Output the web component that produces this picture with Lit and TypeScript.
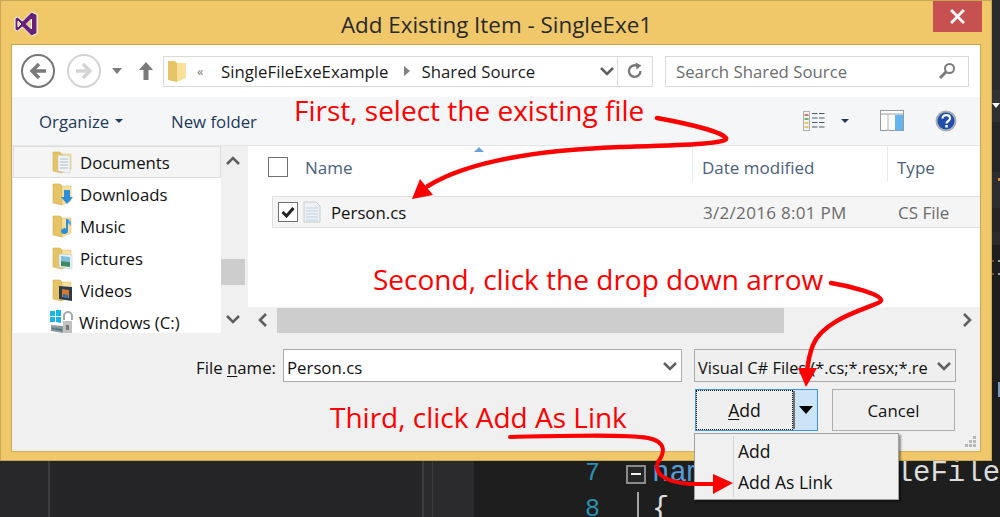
import { LitElement, html, css, svg } from "lit";
import { customElement } from "lit/decorators.js";

const folder = (overlay: unknown = "") => html`<svg class="ficon" viewBox="0 0 24 24" width="24" height="24">
  <path d="M3 2h7l2 2v19l-9-2z" fill="#e6c465" stroke="#d2ad55" stroke-width=".6"/>
  <path d="M12 4h9v15l-9 4z" fill="#f6e09a" stroke="#dcc27a" stroke-width=".6"/>
  ${overlay}
</svg>`;

const overlays: Record<string, unknown> = {
  doc: svg`<path d="M8 5l12 1v17l-12-2z" fill="#f2f3f3" stroke="#c0c4c8" stroke-width=".5"/><path d="M10 9h8M10 12h8M10 15h8M10 18h8" stroke="#9fb4c8" stroke-width=".8"/>`,
  down: svg`<path d="M14 8h6v7h3l-6 7-6-7h3z" fill="#2d8fd8"/>`,
  music: svg`<path d="M18 5v12a3.500 3 0 1 1-2-2.600V5z" fill="#2d8fd8"/><path d="M18 5l3 3v4l-3-3z" fill="#4aa6e4"/>`,
  pic: svg`<path d="M9 8l13 1v14l-13-2z" fill="#e9f2f6" stroke="#b4c0c8" stroke-width=".5"/><path d="M11 10l9 1v5l-9-1z" fill="#7fbce0"/><path d="M11 15l9 1v5l-9-1z" fill="#3d8a5a"/>`,
  vid: svg`<path d="M9 8l13 1v14l-13-2z" fill="#2c3a4c"/><path d="M12 11l7 1v8l-7-1z" fill="#d7772a"/><path d="M13 16l5 1v3l-5-1z" fill="#2c6fb4"/>`,
};

const drive = html`<svg class="ficon" viewBox="0 0 26 24" width="26" height="24">
  <path d="M1 1h5v5H1zM7 0l5-1v7H7zM1 7h5v5H1zM7 7h5v6l-5-1z" fill="#19b4ea"/>
  <path d="M2 15l12 1v7L2 21z" fill="#8d979c"/><path d="M3 18l10 1v2L3 19z" fill="#46787c"/>
  <path d="M15 10V6a4 4 0 0 1 8 0v4" fill="none" stroke="#a6a9aa" stroke-width="2"/>
  <rect x="14" y="11" width="9" height="12" fill="#c0c2c2"/><rect x="17" y="15" width="3" height="5" fill="#777"/>
</svg>`;

const chevron = (cls: string, d: string) => html`<svg class=${cls} viewBox="0 0 14 14" width="14" height="14"><path d=${d} fill="none" stroke="#606060" stroke-width="2.600"/></svg>`;

@customElement("app-root")
export class AppRoot extends LitElement {
  static styles = css`
    :host { display: block; width: 1000px; height: 517px; position: relative; overflow: hidden; font-family: "Open Sans", "Noto Sans", sans-serif; background: #1e1e1e; }
    svg { display: block; flex: none; }

    .ide { height: 517px; display: grid; grid-template-columns: 48px 2px 372px 2px 8px 42px 1fr; background: #252526; overflow: hidden; }
    .ide > div { height: 517px; }
    .p1 { background: #28282a; }
    .ln { background: #3c3c3e; }
    .p2 { background: #252527; }
    .pm { background: #2a2a2c; }
    .p3 { background: #2b2b2e; border-left: 1px solid #3c3c3e; box-sizing: border-box; }
    .code { background: #1e1e1e; padding-top: 456px; box-sizing: border-box; font-family: "Liberation Mono", monospace; overflow: hidden; position: relative; }
    .coderow { display: grid; grid-template-columns: 57px 40px 1fr; column-gap: 6px; height: 36px; font-size: 29px; line-height: 36px; align-items: center; color: #dcdcdc; padding-left: 69px; white-space: nowrap; overflow: hidden; }
    .num { color: #2b91af; font-size: 25px; text-align: right; }
    .kw { color: #569cd6; }
    .collapse { width: 20px; height: 19px; margin-left: 20px; box-sizing: border-box; border: 2px solid #8a8a8a; background: #262626; display: flex; align-items: center; justify-content: center; }
    .collapse i { display: block; width: 10px; height: 2px; background: #f1f1f1; }
    .guide { width: 2px; height: 36px; background: #a5a5a5; margin-left: 31px; }

    .strip { position: absolute; left: 518px; top: 0; width: 8px; height: 454px; display: flex; flex-direction: column; }
    .s1 { height: 90px; background: #2a2b2f; }
    .s2 { height: 32px; background: #2e3034; padding-top: 13px; box-sizing: border-box; }
    .s2 i { display: block; width: 0; height: 0; border: 4px solid transparent; border-top: 5px solid #f4f4f4; border-bottom: 0; }
    .s3 { height: 50px; background: #25262a; }
    .s4 { height: 36px; background: #2c2d30; padding: 6px 0 0 6px; box-sizing: border-box; }
    .s4 i { display: block; width: 2px; height: 3px; background: #d8873c; }
    .s5 { height: 24px; background: #252527; }
    .s6 { height: 13px; background: #2a2a2c; }
    .s7 { height: 15px; }
    .dots { height: 2px; display: flex; justify-content: space-between; }
    .dots i { display: block; width: 2px; height: 2px; }
    .dots .a { background: #7a4a3a; }
    .dots .b { background: #8ca0ac; }
    .s8 { height: 11px; }
    .s9 { height: 15px; margin-left: 6px; width: 2px; background: #7c9ab8; margin-top: 107px; }

    .dialog { position: absolute; left: 0; top: 0; width: 971px; height: 451px; background: #f0c869; border: 1px solid #c9a655; padding: 0 9px 8px 10px; display: flex; flex-direction: column; }
    .titlebar { height: 43px; flex: none; display: flex; align-items: center; justify-content: center; position: relative; font-size: 22.400px; color: #2a2a2a; padding-top: 4px; box-sizing: border-box; }
    .vs { position: absolute; left: 2px; top: 10px; }
    .close { position: absolute; right: 0; top: 0; width: 49px; height: 31px; background: #c75050; display: flex; align-items: center; justify-content: center; }
    .inner { flex: 1; background: #f0f0f0; border: 1px solid #c9a655; border-bottom-color: #d3b060; display: flex; flex-direction: column; min-height: 0; width: 970px; box-sizing: border-box; }

    .nav { height: 52px; flex: none; background: #fff; display: flex; align-items: center; padding: 0 0 0 9px; box-sizing: border-box; }
    .circle { width: 34px; height: 34px; border-radius: 50%; box-sizing: border-box; border: 2.500px solid #767676; display: flex; align-items: center; justify-content: center; }
    .circle.off { border-color: #d4d4d4; margin-left: 12px; }
    .navcaret { margin: 0 0 0 11px; width: 0; height: 0; border: 5px solid transparent; border-top: 6px solid #7c7c7c; border-bottom: 0; }
    .up { margin: 0 9px 0 16px; }
    .addr { width: 490px; height: 31px; box-sizing: border-box; border: 1px solid #d9d9d9; display: flex; align-items: center; font-size: 16.800px; color: #1a1a1a; }
    .addr .fold { margin: 0 0 0 1px; }
    .addr .ch { color: #7a7a7a; font-size: 13px; margin: 0 0 0 8px; width: 24px; }
    .sep { width: 0; height: 0; border: 5.500px solid transparent; border-left: 6px solid #808080; border-right: 0; margin: 0 12px 0 15px; }
    .addr .spacer { flex: 1; }
    .addr .combo-ch { margin-right: 3px; }
    .refresh { width: 34px; height: 29px; border-left: 1px solid #d9d9d9; display: flex; align-items: center; justify-content: center; }
    .search { width: 304px; height: 31px; margin-left: 12px; box-sizing: border-box; border: 1px solid #d9d9d9; display: flex; align-items: center; justify-content: space-between; padding: 0 12px 0 10px; font-size: 16.800px; color: #6d6d6d; }

    .toolbar { height: 49px; flex: none; background: #f5f6f7; border-bottom: 1px solid #e6e6e6; box-sizing: border-box; display: flex; align-items: center; padding: 0 0 0 27px; color: #1e395b; font-size: 16.800px; }
    .caret { width: 0; height: 0; border: 4px solid transparent; border-top: 4.500px solid #1e395b; border-bottom: 0; }
    .org { display: flex; align-items: center; gap: 6px; width: 132px; }
    .tools-r { margin-left: auto; display: flex; align-items: center; padding-right: 23px; }
    .tools-r .caret { margin: 0 31px 0 16px; }
    .tools-r .pane { margin-right: 31px; }

    .panes { height: 187px; flex: none; display: grid; grid-template-columns: 209px 24px 3px 1fr; background: #f0f0f0; }
    .tree { background: #fff; margin-left: 1px; font-size: 16.800px; color: #111; overflow: hidden; }
    .tree .row { height: 32px; display: flex; align-items: center; box-sizing: border-box; padding-left: 37px; gap: 6px; }
    .tree .row.sel { background: #f5f5f5; border: 1px solid #dedede; padding-left: 36px; }
    .tree .row.drive { padding-left: 36px; gap: 4px; }
    .vbar { background: #f0f0f0; display: flex; flex-direction: column; align-items: center; justify-content: space-between; padding: 8px 0 7px; box-sizing: border-box; }
    .vthumb { width: 24px; height: 26px; background: #cdcdcd; margin-top: 64px; }
    .gap { background: #f0f0f0; }
    .list { background: #fff; display: flex; flex-direction: column; min-width: 0; position: relative; }
    .head { height: 50px; flex: none; display: grid; grid-template-columns: 444px 195px 1fr; align-items: start; font-size: 17px; color: #4c607a; }
    .head > div { height: 36px; display: flex; align-items: center; box-sizing: border-box; padding-top: 6px; }
    .head .c1 { padding-left: 20px; gap: 17px; }
    .head .c2, .head .c3 { border-left: 1px solid #e3ecf3; padding-left: 9px; }
    .sort { position: absolute; left: 226px; top: 1px; width: 0; height: 0; border: 5px solid transparent; border-bottom: 5px solid #6ba4d4; border-top: 0; }
    .cb { width: 20px; height: 20px; box-sizing: border-box; border: 1px solid #707070; background: #fff; display: flex; align-items: center; justify-content: center; }
    .frow { margin-left: 24px; height: 32px; flex: none; display: grid; grid-template-columns: 420px 195px 1fr; align-items: center; box-sizing: border-box; background: #f5f5f5; border: 1px solid #dedede; border-right: 0; font-size: 17px; color: #6b6b6b; }
    .frow .c1 { display: flex; align-items: center; padding-left: 5px; gap: 5px; color: #111; font-size: 16.800px; }
    .frow .c1 span.nm { margin-left: 5px; }
    .frow .c2 { padding-left: 10px; letter-spacing: .3px; }
    .frow .c3 { padding-left: 10px; }
    .lspacer { flex: 1; }
    .hbar { height: 26px; flex: none; background: #f0f0f0; display: flex; align-items: center; padding-left: 8px; }
    .hthumb { width: 507px; height: 25px; background: #cdcdcd; margin: 0 0 0 7px; }
    .hbar .r { margin-left: auto; margin-right: 6px; }

    .footer { flex: 1; display: flex; flex-direction: column; font-size: 16.800px; color: #111; padding-top: 16px; box-sizing: border-box; position: relative; }
    .fr1 { display: flex; align-items: center; height: 33px; justify-content: flex-end; padding-right: 24px; }
    .lbl { margin-right: 7px; padding-top: 3px; }
    u { text-underline-offset: 2px; text-decoration-thickness: 1px; }
    .input { width: 399px; height: 33px; box-sizing: border-box; background: #fff; border: 1px solid #ababab; display: flex; align-items: center; justify-content: space-between; padding: 0 4px 0 3px; }
    .input span, .filter span { padding-top: 3px; }
    .filter { width: 262px; height: 33px; margin-left: 12px; box-sizing: border-box; background: #efefef; border: 1px solid #ababab; display: flex; align-items: center; justify-content: space-between; padding: 0 4px 0 3px; white-space: nowrap; overflow: hidden; font-size: 16.400px; }
    .fr2 { display: flex; justify-content: flex-end; gap: 14px; padding: 7px 25px 0 0; }
    .split { width: 123px; height: 42px; box-sizing: border-box; display: grid; grid-template-columns: 97px 1fr; border: 1px solid #3c94dc; background: #cce4f7; }
    .split .main { background: #efefef; outline: 1px dotted #111; outline-offset: -1px; display: flex; align-items: center; justify-content: center; font-size: 17.600px; }
    .split .drop { border-left: 2px solid #707070; display: flex; align-items: center; justify-content: center; margin: 1px 0; }
    .tri { width: 0; height: 0; border: 7px solid transparent; border-top: 8px solid #000; border-bottom: 0; }
    .btn { width: 123px; height: 42px; box-sizing: border-box; background: #efefef; border: 1px solid #adadad; display: flex; align-items: center; justify-content: center; }
    .grip { position: absolute; right: 3px; bottom: 3px; }

    .menu { position: absolute; left: 694px; top: 433px; width: 205px; height: 67px; box-sizing: border-box; background: #f0f0f0; border: 1px solid #a0a0a0; box-shadow: 2px 2px 2px rgba(0,0,0,.4); font-size: 17.500px; color: #111; display: grid; grid-template-rows: 1fr 1fr; padding: 2px 0; }
    .menu div { display: flex; align-items: center; padding-left: 43px; }
    .menu .menuline { position: absolute; left: 38px; top: 2px; bottom: 2px; width: 1px; background: #d4d4d4; padding: 0; }

    .note { position: absolute; color: #ff0000; font-size: 28px; white-space: nowrap; line-height: 36px; }
    .n1 { left: 294px; top: 92px; }
    .n2 { left: 373px; top: 261px; }
    .n3 { left: 330px; top: 399px; }
    .arrows { position: absolute; left: 0; top: 0; pointer-events: none; }
  `;

  render() {
    return html`
      <div class="ide">
        <div class="p1"></div><div class="ln"></div><div class="p2"></div><div class="ln"></div><div class="pm"></div><div class="p3"></div>
        <div class="code">
          <div class="coderow"><span class="num">7</span><span class="collapse"><i></i></span><span><span class="kw">namespace</span> SingleFileE</span></div>
          <div class="coderow"><span class="num">8</span><span class="guide"></span><span>{</span></div>
          <div class="strip">
            <div class="s1"></div>
            <div class="s2"><i></i></div>
            <div class="s3"></div>
            <div class="s4"><i></i></div>
            <div class="s5"></div>
            <div class="s6"></div>
            <div class="s7"></div>
            <div class="dots"><i class="a"></i><i class="b"></i></div>
            <div class="s8"></div>
            <div class="dots"><i class="a"></i><i class="b"></i></div>
            <div class="s9"></div>
          </div>
        </div>
      </div>

      <div class="dialog">
        <div class="titlebar">
          <svg class="vs" viewBox="0 0 26 26" width="26" height="26">
            <path d="M18.500 1 24 3.500v19L18.500 25l-9-9-5 4L2 18.800V7.200L4.500 6l5 4zM18.500 8l-5 5 5 5zM5 10v6l3-3z" fill="#68217a" fill-rule="evenodd" stroke="#fff" stroke-width="1"/>
          </svg>
          <span>Add Existing Item - SingleExe1</span>
          <div class="close"><svg viewBox="0 0 14 14" width="15" height="15"><path d="M1 1l12 12M13 1L1 13" stroke="#fff" stroke-width="2.600"/></svg></div>
        </div>
        <div class="inner">
          <div class="nav">
            <div class="circle"><svg viewBox="0 0 20 20" width="20" height="20"><path d="M11 3l-7 7 7 7M4 10h14" fill="none" stroke="#7a7a7a" stroke-width="3.400"/></svg></div>
            <div class="circle off"><svg viewBox="0 0 20 20" width="20" height="20"><path d="M9 3l7 7-7 7M16 10H2" fill="none" stroke="#d4d4d4" stroke-width="3.400"/></svg></div>
            <div class="navcaret"></div>
            <svg class="up" viewBox="0 0 16 20" width="16" height="20"><path d="M8 1l7 8h-4.500v10h-5V9H1z" fill="#7a7a7a"/></svg>
            <div class="addr">
              <span class="fold"><svg viewBox="0 0 24 24" width="24" height="24"><path d="M3 2h7l2 2v19l-9-2z" fill="#e6c465"/><path d="M12 4h9v15l-9 4z" fill="#f6e09a"/></svg></span>
              <span class="ch">«</span><span>SingleFileExeExample</span><span class="sep"></span><span>Shared Source</span>
              <span class="spacer"></span>
              ${chevron("combo-ch", "M1 4l6 6 6-6")}
              <div class="refresh"><svg viewBox="0 0 18 18" width="18" height="18"><path d="M14.500 9A5.800 5.800 0 1 1 11 3.700" fill="none" stroke="#7a7a7a" stroke-width="2.400"/><path d="M9.500.5l6 3-5 4z" fill="#7a7a7a"/></svg></div>
            </div>
            <div class="search"><span>Search Shared Source</span>
              <svg viewBox="0 0 18 18" width="18" height="18"><circle cx="11.500" cy="6.500" r="4.500" fill="none" stroke="#7c7c7c" stroke-width="2"/><path d="M8 10l-6 6" stroke="#7c7c7c" stroke-width="3"/></svg>
            </div>
          </div>

          <div class="toolbar">
            <div class="org"><span>Organize</span><span class="caret"></span></div>
            <span>New folder</span>
            <div class="tools-r">
              <svg viewBox="0 0 22 20" width="22" height="20"><rect x=".5" y=".5" width="6" height="19" fill="#f4f4f0" stroke="#b0b0b0"/><path d="M1.500 4h4" stroke="#c8494a" stroke-width="1.500"/><path d="M1.500 8h4" stroke="#4a9a4a" stroke-width="1.500"/><path d="M1.500 12h4" stroke="#d8b84a" stroke-width="1.500"/><path d="M1.500 16h4" stroke="#d8b84a" stroke-width="1.500"/><path d="M9 2.500h13M9 7h13M9 11.500h13M9 16h13" stroke="#4a5a72" stroke-width="1.200" stroke-dasharray="5.500 1.500"/></svg>
              <span class="caret"></span>
              <svg class="pane" viewBox="0 0 24 22" width="24" height="22"><rect x=".5" y=".5" width="23" height="20" fill="#fff" stroke="#9a9a9a"/><path d="M1 4h22" stroke="#9a9a9a"/><path d="M8 4v17" stroke="#b0b0b0"/><rect x="15" y="5" width="8" height="15.500" fill="#64b4f0"/></svg>
              <svg viewBox="0 0 22 22" width="22" height="22"><circle cx="11" cy="11" r="9.500" fill="#1f4fa8" stroke="#a8b0b8" stroke-width="2"/><path d="M7.500 8.500c0-4.500 7.500-4.500 7.500 0 0 2.500-3.500 2.500-3.500 5" fill="none" stroke="#fff" stroke-width="2.200"/><rect x="10.300" y="15" width="2.500" height="2.500" fill="#fff"/></svg>
            </div>
          </div>

          <div class="panes">
            <div class="tree">
              <div class="row sel">${folder(overlays.doc)}<span>Documents</span></div>
              <div class="row">${folder(overlays.down)}<span>Downloads</span></div>
              <div class="row">${folder(overlays.music)}<span>Music</span></div>
              <div class="row">${folder(overlays.pic)}<span>Pictures</span></div>
              <div class="row">${folder(overlays.vid)}<span>Videos</span></div>
              <div class="row drive">${drive}<span>Windows (C:)</span></div>
            </div>
            <div class="vbar">
              ${chevron("", "M1 10l6-6 6 6")}
              <div class="vthumb"></div>
              ${chevron("", "M1 4l6 6 6-6")}
            </div>
            <div class="gap"></div>
            <div class="list">
              <span class="sort"></span>
              <div class="head">
                <div class="c1"><span class="cb"></span><span>Name</span></div>
                <div class="c2">Date modified</div>
                <div class="c3">Type</div>
              </div>
              <div class="frow">
                <div class="c1">
                  <span class="cb"><svg viewBox="0 0 14 12" width="14" height="12"><path d="M1.500 6l4 4L12.500 2" fill="none" stroke="#222" stroke-width="3"/></svg></span>
                  <svg viewBox="0 0 18 22" width="18" height="22"><path d="M1 1h12l4 4v16H1z" fill="#eef2f6" stroke="#c8ccd0"/><path d="M3 7h12M3 10h12M3 13h12M3 16h12M3 19h12" stroke="#c0d2e4"/></svg>
                  <span class="nm">Person.cs</span>
                </div>
                <div class="c2">3/2/2016 8:01 PM</div>
                <div class="c3">CS File</div>
              </div>
              <div class="lspacer"></div>
              <div class="hbar">
                ${chevron("", "M10 1L4 7l6 6")}
                <div class="hthumb"></div>
                ${chevron("r", "M4 1l6 6-6 6")}
              </div>
            </div>
          </div>

          <div class="footer">
            <div class="fr1">
              <span class="lbl">File <u>n</u>ame:</span>
              <div class="input"><span>Person.cs</span>${chevron("", "M1 4l6 6 6-6")}</div>
              <div class="filter"><span>Visual C# Files (*.cs;*.resx;*.re</span>${chevron("", "M1 4l6 6 6-6")}</div>
            </div>
            <div class="fr2">
              <div class="split"><div class="main"><span><u>A</u>dd</span></div><div class="drop"><span class="tri"></span></div></div>
              <div class="btn">Cancel</div>
            </div>
            <svg class="grip" viewBox="0 0 12 12" width="12" height="12"><path d="M8 0h3v3H8zM4 4h3v3H4zM8 4h3v3H8zM0 8h3v3H0zM4 8h3v3H4zM8 8h3v3H8z" fill="#b8b8b8"/></svg>
          </div>
        </div>
      </div>

      <div class="menu">
        <div class="menuline"></div>
        <div>Add</div>
        <div>Add As Link</div>
      </div>

      <div class="note n1">First, select the existing file</div>
      <div class="note n2">Second, click the drop down arrow</div>
      <div class="note n3">Third, click Add As Link</div>

      <svg class="arrows" width="1000" height="517" viewBox="0 0 1000 517">
        <g fill="none" stroke="#ff0000" stroke-linecap="round">
          <path d="M657 118C690 124 722 132 726 138C729 144 680 145 620 147C540 150 470 160 428 186" stroke-width="4.500"/>
          <path d="M831 283C850 286 880 294 881 300C882 306 825 315 813 345C809 355 808 362 807 372" stroke-width="4.500"/>
          <path d="M510 437C560 436 625 434 648 438C668 442 664 454 658 462C654 472 662 482 690 484L715 484" stroke-width="4"/>
        </g>
        <g fill="#ff0000">
          <path d="M412 199L420 179L433 195Z"/>
          <path d="M806 387L798 368L817 368Z"/>
          <path d="M733 483L713 474L713 494Z"/>
        </g>
      </svg>
    `;
  }
}
